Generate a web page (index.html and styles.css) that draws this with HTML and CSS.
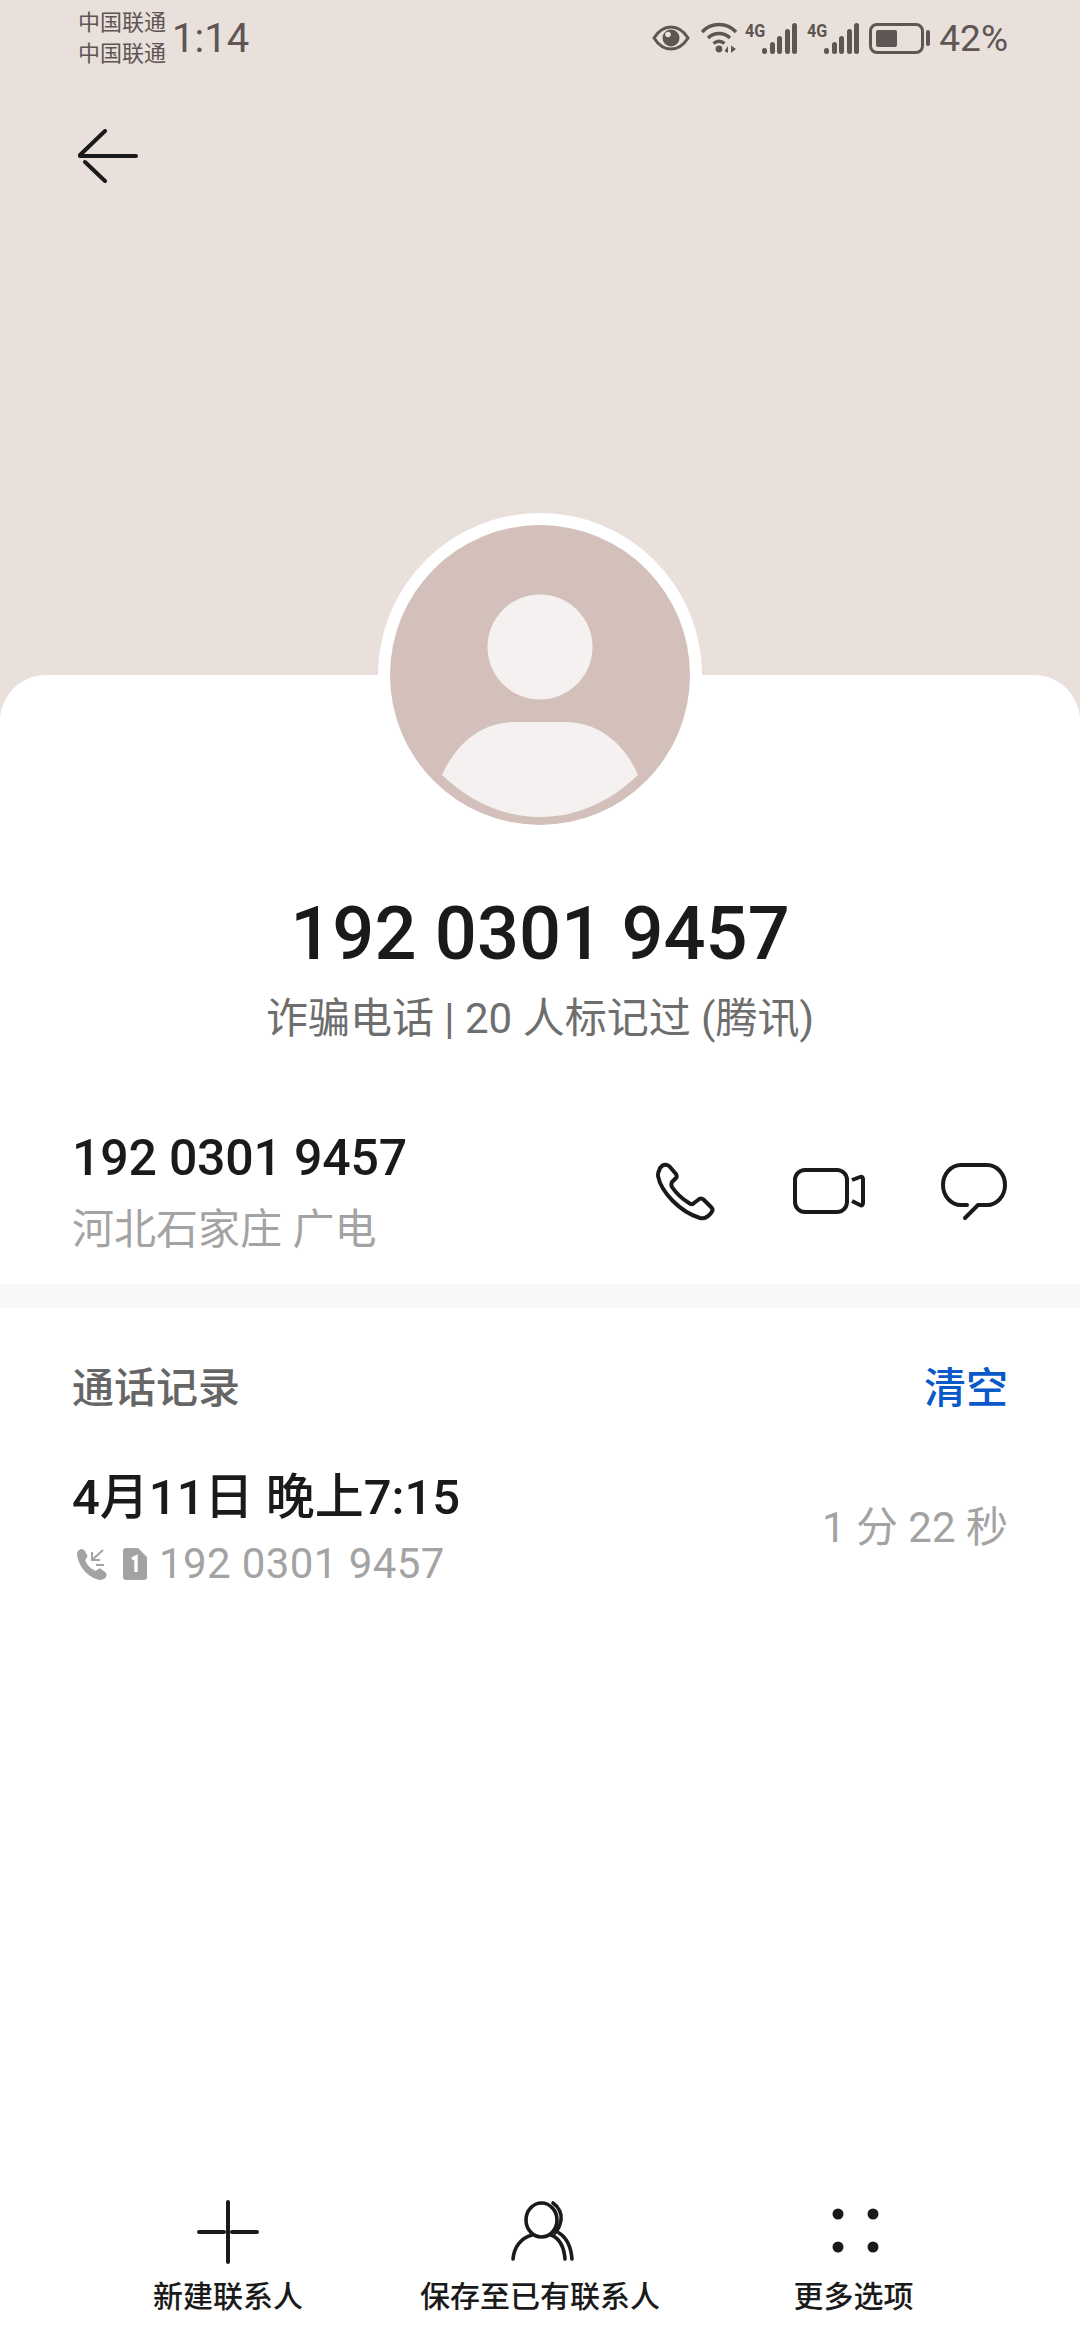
FILE: index.html
```html
<!DOCTYPE html>
<html lang="zh-CN">
<head>
  <meta charset="UTF-8">
  <title>192 0301 9457</title>
  <link rel="stylesheet" href="styles.css">
</head>
<body>

  <div class="top">
    <div class="statusbar">
      <div class="carrier">
        <span>中国联通</span>
        <span>中国联通</span>
      </div>
      <span class="clock">1:14</span>
      <div class="status-right">
        <svg class="ic-eye" viewBox="0 0 38 26">
          <path d="M2 13C7 5 12 2 19 2s12 3 17 11c-5 8-10 11-17 11S7 21 2 13z" fill="none" stroke="#5f5553" stroke-width="3"/>
          <circle cx="19" cy="13" r="8.500" fill="#5f5553"/>
          <circle cx="16" cy="9.500" r="2.800" fill="#e9e0dc"/>
        </svg>
        <svg class="ic-wifi" viewBox="0 0 37 32">
          <g fill="none" stroke="#5f5553" stroke-width="3.400">
            <path d="M1 10C10 0 26 0 35 10"/>
            <path d="M7 16c6-6 16-6 22 0"/>
            <path d="M12.500 21.500c3.500-3 7.500-3 11 0"/>
          </g>
          <circle cx="18" cy="27" r="3.400" fill="#5f5553"/>
          <path d="M27 31l0-7-3.500 5zM30 23.500v7.500l5-4z" fill="#5f5553"/>
        </svg>
        <div class="signal">
          <span class="net">4G</span>
          <i class="b1"></i><i class="b2"></i><i class="b3"></i><i class="b4"></i><i class="b5"></i>
        </div>
        <div class="signal">
          <span class="net">4G</span>
          <i class="b1"></i><i class="b2"></i><i class="b3"></i><i class="b4"></i><i class="b5"></i>
        </div>
        <div class="battery">
          <div class="battery-body"><div class="battery-level"></div></div>
          <div class="battery-cap"></div>
        </div>
        <span class="percent">42%</span>
      </div>
    </div>
    <svg class="back" viewBox="0 0 60 54">
      <path d="M2 27h56M27 2L2 26M27 52L7 33" fill="none" stroke="#1a1a1a" stroke-width="4" stroke-linecap="round"/>
    </svg>
  </div>

  <div class="card">
    <div class="avatar">
      <svg viewBox="0 0 300 300">
        <circle cx="150" cy="150" r="150" fill="#d3c0ba"/>
        <circle cx="150" cy="122" r="52.500" fill="#f5f1f0"/>
        <path d="M52 250C66 218 92 197 125 197h50c33 0 59 21 73 53C190 306 110 306 52 250z" fill="#f5f1f0"/>
      </svg>
    </div>

    <div class="identity">
      <h1 class="name">192 0301 9457</h1>
      <p class="tag">诈骗电话 | 20 人标记过 (腾讯)</p>
    </div>

    <div class="number-row">
      <div>
        <div class="number">192 0301 9457</div>
        <div class="region">河北石家庄 广电</div>
      </div>
      <div class="actions">
        <svg class="ic-phone" viewBox="0 0 60 60">
          <path d="M4 9C5 4 9 2 12 3c1 0 2 1 3 2l6 7c1 2 1 3 0 4l-4 4c-1 2-1 3 0 5 4 6 12 13 17 16 2 2 4 1 5 0l4-3c2-2 4-2 6 0l7 7c2 2 2 4 0 6-3 4-7 6-11 5C25 50 6 30 3 14c0-2 0-4 1-5z" fill="none" stroke="#1a1a1a" stroke-width="4" stroke-linejoin="round"/>
        </svg>
        <svg class="ic-video" viewBox="0 0 72 48">
          <rect x="2" y="2" width="52" height="42" rx="10" fill="none" stroke="#1a1a1a" stroke-width="4"/>
          <path d="M59 12l8-3c2-1 3 1 3 2v24c0 2-1 3-3 2l-8-4" fill="none" stroke="#1a1a1a" stroke-width="4" stroke-linejoin="round"/>
        </svg>
        <svg class="ic-chat" viewBox="0 0 66 58">
          <path d="M26 42H20C10 42 2 33 2 22S10 2 20 2h26c10 0 18 9 18 20s-8 20-18 20H37L24 55" fill="none" stroke="#1a1a1a" stroke-width="4" stroke-linecap="round" stroke-linejoin="round"/>
        </svg>
      </div>
    </div>

    <div class="divider"></div>

    <div class="log-head">
      <span class="log-title">通话记录</span>
      <span class="log-clear">清空</span>
    </div>

    <div class="log-row">
      <div>
        <div class="log-date">4月11日 晚上7:15</div>
        <div class="log-sub">
          <svg class="ic-in" viewBox="0 0 32 32">
            <path d="M2 6c0-3 3-5 5-5 1 0 2 1 3 2l2 4c1 1 0 3-1 4-1 1-1 2 0 3 2 4 4 6 8 8 1 1 2 1 3 0 1-1 3-2 4-1l4 3c2 1 2 3 1 5-1 2-4 3-6 3C13 30 3 18 2 6z" fill="#a3a3a3"/>
            <path d="M28 2L17 12M17 4v8h8M21 17h8" fill="none" stroke="#a3a3a3" stroke-width="2"/>
          </svg>
          <svg class="ic-sim" viewBox="0 0 24 32">
            <path d="M3 0h12l9 9v20c0 2-1 3-3 3H3c-2 0-3-1-3-3V3c0-2 1-3 3-3z" fill="#a3a3a3"/>
            <path d="M9 11l4-2v15" fill="none" stroke="#fff" stroke-width="3.400"/>
          </svg>
          <span class="log-num">192 0301 9457</span>
        </div>
      </div>
      <span class="log-dur">1 分 22 秒</span>
    </div>
  </div>

  <div class="bottom">
    <div class="tool">
      <svg class="ic-tool" viewBox="0 0 64 64">
        <path d="M32 2v60M3 32h25M36 32h25" fill="none" stroke="#1a1a1a" stroke-width="4" stroke-linecap="round"/>
      </svg>
      <span>新建联系人</span>
    </div>
    <div class="tool">
      <svg class="ic-tool" viewBox="0 0 64 64">
        <g fill="none" stroke="#1a1a1a" stroke-width="3.600" stroke-linecap="round">
          <ellipse cx="33.500" cy="20" rx="15.500" ry="17"/>
          <path d="M5 59C6 47 13 38 24 35M43 35C51 38 56 47 57 59"/>
          <path d="M45 3C51 7 54 14 53 20C52 26 50 30 47 33M51 33C59 38 63 47 64 59"/>
        </g>
      </svg>
      <span>保存至已有联系人</span>
    </div>
    <div class="tool">
      <svg class="ic-tool" viewBox="0 0 64 64">
        <circle cx="18" cy="14" r="5.500" fill="#1a1a1a"/>
        <circle cx="53" cy="14" r="5.500" fill="#1a1a1a"/>
        <circle cx="18" cy="47" r="5.500" fill="#1a1a1a"/>
        <circle cx="53" cy="47" r="5.500" fill="#1a1a1a"/>
      </svg>
      <span class="more">更多选项</span>
    </div>
  </div>

</body>
</html>
```

FILE: styles.css
```css
* {
  box-sizing: border-box;
}

html, body {
  margin: 0;
  height: 2340px;
}

body {
  width: 1080px;
  display: flex;
  flex-direction: column;
  background: #e9e0dc;
  color: #1a1a1a;
  font-family: Roboto, "Noto Sans CJK SC", sans-serif;
  overflow: hidden;
}

.top {
  height: 675px;
  padding: 0 78px;
}

.statusbar {
  height: 76px;
  display: flex;
  align-items: center;
  color: #5f5553;
}

.carrier {
  display: flex;
  flex-direction: column;
  width: 95px;
  font-size: 22px;
  line-height: 31px;
  margin-top: -1px;
}

.clock {
  font-size: 40px;
  margin-left: -1px;
}

.status-right {
  margin-left: auto;
  margin-right: -6px;
  display: flex;
  align-items: center;
}

.ic-eye {
  width: 38px;
  height: 26px;
  margin-right: 11px;
}

.ic-wifi {
  width: 37px;
  height: 32px;
  margin-right: 7px;
}

.signal {
  position: relative;
  width: 52px;
  height: 32px;
  margin-right: 10px;
  display: flex;
  align-items: flex-end;
  justify-content: flex-end;
  gap: 2.500px;
}

.signal i {
  width: 5px;
  background: #5f5553;
  border-radius: 2.500px;
}

.b1 { height: 6px; }
.b2 { height: 12px; }
.b3 { height: 18px; }
.b4 { height: 25px; }
.b5 { height: 31px; }

.net {
  position: absolute;
  left: 0;
  top: -1px;
  font-size: 19px;
  line-height: 20px;
  font-weight: 700;
  transform: scaleX(.85);
  transform-origin: left;
}

.battery {
  display: flex;
  align-items: center;
  margin-right: 9px;
}

.battery-body {
  width: 55px;
  height: 31px;
  border: 3px solid #5f5553;
  border-radius: 8px;
  padding: 4px;
}

.battery-level {
  width: 21px;
  height: 100%;
  background: #5f5553;
  border-radius: 2px;
}

.battery-cap {
  width: 4px;
  height: 16px;
  margin-left: 2px;
  background: #5f5553;
  border-radius: 2px;
}

.percent {
  font-size: 37px;
}

.back {
  display: block;
  width: 60px;
  height: 54px;
  margin-top: 53px;
}

.card {
  position: relative;
  flex: 1;
  background: #fff;
  border-radius: 46px 46px 0 0;
}

.avatar {
  position: absolute;
  left: 378px;
  top: -162px;
  width: 324px;
  height: 324px;
  padding: 12px;
  border-radius: 50%;
  background: #fff;
}

.avatar svg {
  display: block;
  width: 300px;
  height: 300px;
}

.identity {
  padding-top: 214px;
  text-align: center;
}

.name {
  margin: 0;
  font-size: 74px;
  font-weight: 500;
  line-height: 90px;
}

.tag {
  margin: 12px 0 0;
  font-size: 42px;
  line-height: 56px;
  color: #6e6e6e;
}

.number-row {
  margin-top: 78px;
  padding: 0 73px 0 72px;
  display: flex;
  justify-content: space-between;
  align-items: center;
}

.number {
  font-size: 50px;
  font-weight: 500;
  line-height: 66px;
  letter-spacing: -.2px;
}

.region {
  margin-top: 10px;
  font-size: 42px;
  line-height: 58px;
  color: #a3a3a3;
}

.actions {
  display: flex;
  align-items: center;
}

.ic-phone {
  width: 60px;
  height: 60px;
}

.ic-video {
  width: 72px;
  height: 48px;
  margin-left: 78px;
}

.ic-chat {
  width: 66px;
  height: 58px;
  margin-left: 76px;
}

.divider {
  height: 24px;
  margin-top: 25px;
  background: #f7f7f7;
}

.log-head {
  display: flex;
  justify-content: space-between;
  align-items: center;
  padding: 0 72px;
  margin-top: 53px;
  line-height: 56px;
}

.log-title {
  font-size: 42px;
  font-weight: 500;
  color: #666;
}

.log-clear {
  font-size: 42px;
  font-weight: 500;
  color: #0a59c8;
}

.log-row {
  display: flex;
  justify-content: space-between;
  align-items: center;
  padding: 0 72px;
  margin-top: 48px;
}

.log-date {
  font-size: 49px;
  font-weight: 500;
  line-height: 66px;
}

.log-sub {
  display: flex;
  align-items: center;
  margin-top: 5px;
}

.ic-in {
  width: 32px;
  height: 32px;
  margin-left: 3px;
}

.ic-sim {
  width: 24px;
  height: 32px;
  margin-left: 16px;
}

.log-num {
  margin-left: 12px;
  font-size: 42px;
  line-height: 56px;
  letter-spacing: .4px;
  color: #a3a3a3;
}

.log-dur {
  margin-bottom: 11px;
  font-size: 42px;
  color: #a3a3a3;
}

.bottom {
  position: absolute;
  left: 0;
  right: 0;
  bottom: 0;
  height: 140px;
  display: flex;
  justify-content: center;
}

.tool {
  display: flex;
  flex-direction: column;
  align-items: center;
  font-size: 30px;
  font-weight: 500;
}

.tool:nth-child(1) { width: 456px; }
.tool:nth-child(2) { width: 168px; }
.tool:nth-child(3) { width: 456px; }

.tool span {
  margin-top: 13px;
  line-height: 40px;
  white-space: nowrap;
}

.tool .more {
  margin-left: 3px;
}

.ic-tool {
  width: 64px;
  height: 64px;
  overflow: visible;
}
```
